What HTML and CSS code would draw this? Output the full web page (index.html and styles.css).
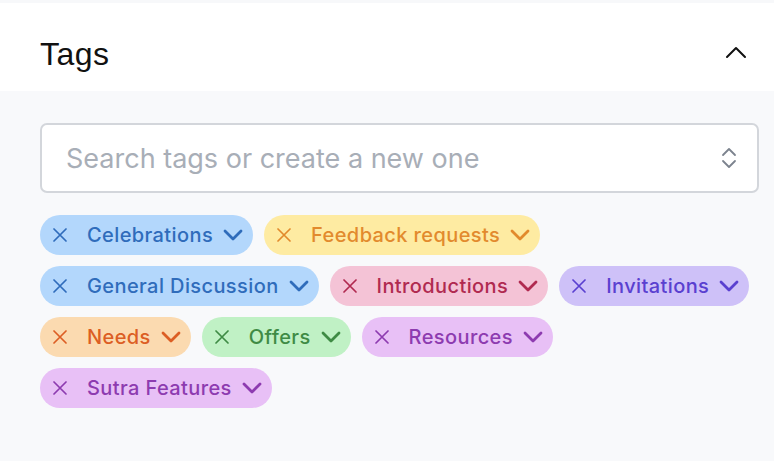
FILE: index.html
```html
<!DOCTYPE html>
<html>
<head>
<meta charset="utf-8">
<link rel="stylesheet" href="styles.css">
</head>
<body>
<div class="app">
  <header class="header">
    <h2 class="title">Tags</h2>
    <svg class="collapse" width="22" height="14" viewBox="0 0 22 14"><path d="M2 12 L11 3 L20 12" fill="none" stroke="#111" stroke-width="2" stroke-linecap="round" stroke-linejoin="round"/></svg>
  </header>
  <section class="body">
    <div class="search">
      <span class="placeholder">Search tags or create a new one</span>
      <svg class="updown" width="16" height="22" viewBox="0 0 16 22"><path d="M2 8 L8 2 L14 8 M2 14 L8 20 L14 14" fill="none" stroke="#7c838e" stroke-width="1.8" stroke-linecap="round" stroke-linejoin="round"/></svg>
    </div>
    <div class="tags">
      <span class="tag blue"><svg class="x" width="14" height="14" viewBox="0 0 14 14"><path d="M1 1 L13 13 M13 1 L1 13"/></svg><span class="label">Celebrations</span><svg class="chev" width="20" height="12" viewBox="0 0 20 12"><path d="M2 2 L10 10 L18 2"/></svg></span>
      <span class="tag yellow"><svg class="x" width="14" height="14" viewBox="0 0 14 14"><path d="M1 1 L13 13 M13 1 L1 13"/></svg><span class="label">Feedback requests</span><svg class="chev" width="20" height="12" viewBox="0 0 20 12"><path d="M2 2 L10 10 L18 2"/></svg></span>
      <span class="tag blue"><svg class="x" width="14" height="14" viewBox="0 0 14 14"><path d="M1 1 L13 13 M13 1 L1 13"/></svg><span class="label">General Discussion</span><svg class="chev" width="20" height="12" viewBox="0 0 20 12"><path d="M2 2 L10 10 L18 2"/></svg></span>
      <span class="tag pink"><svg class="x" width="14" height="14" viewBox="0 0 14 14"><path d="M1 1 L13 13 M13 1 L1 13"/></svg><span class="label">Introductions</span><svg class="chev" width="20" height="12" viewBox="0 0 20 12"><path d="M2 2 L10 10 L18 2"/></svg></span>
      <span class="tag lavender"><svg class="x" width="14" height="14" viewBox="0 0 14 14"><path d="M1 1 L13 13 M13 1 L1 13"/></svg><span class="label">Invitations</span><svg class="chev" width="20" height="12" viewBox="0 0 20 12"><path d="M2 2 L10 10 L18 2"/></svg></span>
      <span class="tag peach"><svg class="x" width="14" height="14" viewBox="0 0 14 14"><path d="M1 1 L13 13 M13 1 L1 13"/></svg><span class="label">Needs</span><svg class="chev" width="20" height="12" viewBox="0 0 20 12"><path d="M2 2 L10 10 L18 2"/></svg></span>
      <span class="tag green"><svg class="x" width="14" height="14" viewBox="0 0 14 14"><path d="M1 1 L13 13 M13 1 L1 13"/></svg><span class="label">Offers</span><svg class="chev" width="20" height="12" viewBox="0 0 20 12"><path d="M2 2 L10 10 L18 2"/></svg></span>
      <span class="tag purple"><svg class="x" width="14" height="14" viewBox="0 0 14 14"><path d="M1 1 L13 13 M13 1 L1 13"/></svg><span class="label">Resources</span><svg class="chev" width="20" height="12" viewBox="0 0 20 12"><path d="M2 2 L10 10 L18 2"/></svg></span>
      <span class="tag purple"><svg class="x" width="14" height="14" viewBox="0 0 14 14"><path d="M1 1 L13 13 M13 1 L1 13"/></svg><span class="label">Sutra Features</span><svg class="chev" width="20" height="12" viewBox="0 0 20 12"><path d="M2 2 L10 10 L18 2"/></svg></span>
    </div>
  </section>
</div>
</body>
</html>
```
FILE: styles.css
```css
* { box-sizing: border-box; }
html, body { margin: 0; padding: 0; background: #ffffff; }
body { font-family: Inter, "Liberation Sans", sans-serif; }
.app { padding-top: 3px; background: #f7f8fa; }
.header {
  height: 88px;
  background: #ffffff;
  display: flex;
  align-items: center;
  justify-content: space-between;
  padding: 14px 27px 0 40px;
}
.title {
  margin: 0;
  font-family: "Liberation Sans", Arial, sans-serif;
  font-weight: 400;
  font-size: 32px;
  letter-spacing: 0.5px;
  color: #111111;
}
.collapse { margin-top: -4px; }
.body {
  background: #f8f9fb;
  padding: 32px 15px 53px 40px;
}
.search {
  height: 70px;
  background: #ffffff;
  border: 2px solid #d3d6db;
  border-radius: 7px;
  display: flex;
  align-items: center;
  justify-content: space-between;
  padding: 0 20px 0 24px;
}
.placeholder {
  font-size: 27px;
  color: #a8aeb7;
}
.tags {
  margin-top: 22px;
  display: flex;
  flex-wrap: wrap;
  gap: 11px;
}
.tag {
  height: 40px;
  border-radius: 20px;
  display: inline-flex;
  align-items: center;
  padding: 0 10px 0 13px;
  font-size: 20px;
  font-weight: 500;
  letter-spacing: 0.4px;
}
.tag svg path { fill: none; stroke: currentColor; stroke-linecap: round; stroke-linejoin: round; }
.x path { stroke-width: 1.7; }
.chev path { stroke-width: 2.8; }
.label { margin: 0 10px 0 20px; }
.blue { background: #b3d7fc; color: #2f6cbb; }
.yellow { background: #feeba2; color: #e28a2d; }
.pink { background: #f4c3d6; color: #b02a50; }
.lavender { background: #cec1f8; color: #5a40d0; }
.peach { background: #fbdab0; color: #dc5e24; }
.green { background: #c0f1c5; color: #3f8b45; }
.purple { background: #e8c0f6; color: #8d3bb0; }
```
